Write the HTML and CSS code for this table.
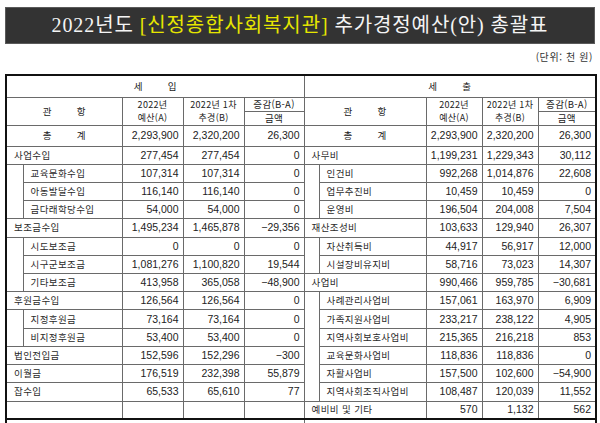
FILE: index.html
```html
<!DOCTYPE html>
<html lang="ko">
<head>
<meta charset="utf-8">
<title>2022년도 추가경정예산(안) 총괄표</title>
<link rel="stylesheet" href="styles.css">
</head>
<body>
<div class="page">
  <div class="title">2022년도 <span class="hl">[신정종합사회복지관]</span> 추가경정예산(안) 총괄표</div>
  <div class="unit">(단위: 천 원)</div>
  <table class="sheet">
    <colgroup>
      <col class="c-sub-l"><col class="c-lab-l"><col class="c-a-l"><col class="c-b-l"><col class="c-d-l">
      <col class="c-sub-r"><col class="c-lab-r"><col class="c-a-r"><col class="c-b-r"><col class="c-d-r">
    </colgroup>
    <tr class="r-sec">
      <td colspan="5" class="hd sp">세 입</td>
      <td colspan="5" class="hd sp">세 출</td>
    </tr>
    <tr class="r-h1">
      <td colspan="2" rowspan="2" class="hd sp">관 항</td>
      <td rowspan="2" class="hd two">2022년<br>예산(A)</td>
      <td rowspan="2" class="hd two">2022년 1차<br>추경(B)</td>
      <td class="hd">증감(B-A)</td>
      <td colspan="2" rowspan="2" class="hd sp">관 항</td>
      <td rowspan="2" class="hd two">2022년<br>예산(A)</td>
      <td rowspan="2" class="hd two">2022년 1차<br>추경(B)</td>
      <td class="hd">증감(B-A)</td>
    </tr>
    <tr class="r-h2">
      <td class="hd">금액</td>
      <td class="hd">금액</td>
    </tr>
    <tr class="r-tot">
      <td colspan="2" class="hd sp">총 계</td>
      <td class="n">2,293,900</td><td class="n">2,320,200</td><td class="n">26,300</td>
      <td colspan="2" class="hd sp">총 계</td>
      <td class="n">2,293,900</td><td class="n">2,320,200</td><td class="n">26,300</td>
    </tr>
    <tr class="r">
      <td colspan="2" class="lab top">사업수입</td>
      <td class="n">277,454</td><td class="n">277,454</td><td class="n">0</td>
      <td colspan="2" class="lab top">사무비</td>
      <td class="n">1,199,231</td><td class="n">1,229,343</td><td class="n">30,112</td>
    </tr>
    <tr class="r">
      <td rowspan="3" class="blank"></td>
      <td class="lab">교육문화수입</td>
      <td class="n">107,314</td><td class="n">107,314</td><td class="n">0</td>
      <td rowspan="3" class="blank"></td>
      <td class="lab">인건비</td>
      <td class="n">992,268</td><td class="n">1,014,876</td><td class="n">22,608</td>
    </tr>
    <tr class="r">
      <td class="lab">아동발달수입</td>
      <td class="n">116,140</td><td class="n">116,140</td><td class="n">0</td>
      <td class="lab">업무추진비</td>
      <td class="n">10,459</td><td class="n">10,459</td><td class="n">0</td>
    </tr>
    <tr class="r">
      <td class="lab">금다래학당수입</td>
      <td class="n">54,000</td><td class="n">54,000</td><td class="n">0</td>
      <td class="lab">운영비</td>
      <td class="n">196,504</td><td class="n">204,008</td><td class="n">7,504</td>
    </tr>
    <tr class="r">
      <td colspan="2" class="lab top">보조금수입</td>
      <td class="n">1,495,234</td><td class="n">1,465,878</td><td class="n">−29,356</td>
      <td colspan="2" class="lab top">재산조성비</td>
      <td class="n">103,633</td><td class="n">129,940</td><td class="n">26,307</td>
    </tr>
    <tr class="r">
      <td rowspan="3" class="blank"></td>
      <td class="lab">시도보조금</td>
      <td class="n">0</td><td class="n">0</td><td class="n">0</td>
      <td rowspan="2" class="blank"></td>
      <td class="lab">자산취득비</td>
      <td class="n">44,917</td><td class="n">56,917</td><td class="n">12,000</td>
    </tr>
    <tr class="r">
      <td class="lab">시구군보조금</td>
      <td class="n">1,081,276</td><td class="n">1,100,820</td><td class="n">19,544</td>
      <td class="lab">시설장비유지비</td>
      <td class="n">58,716</td><td class="n">73,023</td><td class="n">14,307</td>
    </tr>
    <tr class="r">
      <td class="lab">기타보조금</td>
      <td class="n">413,958</td><td class="n">365,058</td><td class="n">−48,900</td>
      <td colspan="2" class="lab top">사업비</td>
      <td class="n">990,466</td><td class="n">959,785</td><td class="n">−30,681</td>
    </tr>
    <tr class="r">
      <td colspan="2" class="lab top">후원금수입</td>
      <td class="n">126,564</td><td class="n">126,564</td><td class="n">0</td>
      <td rowspan="6" class="blank"></td>
      <td class="lab">사례관리사업비</td>
      <td class="n">157,061</td><td class="n">163,970</td><td class="n">6,909</td>
    </tr>
    <tr class="r">
      <td rowspan="2" class="blank"></td>
      <td class="lab">지정후원금</td>
      <td class="n">73,164</td><td class="n">73,164</td><td class="n">0</td>
      <td class="lab">가족지원사업비</td>
      <td class="n">233,217</td><td class="n">238,122</td><td class="n">4,905</td>
    </tr>
    <tr class="r">
      <td class="lab">비지정후원금</td>
      <td class="n">53,400</td><td class="n">53,400</td><td class="n">0</td>
      <td class="lab">지역사회보호사업비</td>
      <td class="n">215,365</td><td class="n">216,218</td><td class="n">853</td>
    </tr>
    <tr class="r">
      <td colspan="2" class="lab top">법인전입금</td>
      <td class="n">152,596</td><td class="n">152,296</td><td class="n">−300</td>
      <td class="lab">교육문화사업비</td>
      <td class="n">118,836</td><td class="n">118,836</td><td class="n">0</td>
    </tr>
    <tr class="r">
      <td colspan="2" class="lab top">이월금</td>
      <td class="n">176,519</td><td class="n">232,398</td><td class="n">55,879</td>
      <td class="lab">자활사업비</td>
      <td class="n">157,500</td><td class="n">102,600</td><td class="n">−54,900</td>
    </tr>
    <tr class="r">
      <td colspan="2" class="lab top">잡수입</td>
      <td class="n">65,533</td><td class="n">65,610</td><td class="n">77</td>
      <td class="lab">지역사회조직사업비</td>
      <td class="n">108,487</td><td class="n">120,039</td><td class="n">11,552</td>
    </tr>
    <tr class="r">
      <td colspan="2" class="lab top"></td>
      <td class="n"></td><td class="n"></td><td class="n"></td>
      <td colspan="2" class="lab top">예비비 및 기타</td>
      <td class="n">570</td><td class="n">1,132</td><td class="n">562</td>
    </tr>
    <tr class="r r-end">
      <td colspan="5" class="lab top"></td>
      <td colspan="5" class="lab top"></td>
    </tr>
  </table>
</div>
</body>
</html>
```

FILE: styles.css
```css
* {
  box-sizing: border-box;
}

html, body {
  margin: 0;
  padding: 0;
  background: #ffffff;
  overflow: hidden;
}

body {
  font-family: "Noto Sans CJK KR", "Noto Sans", sans-serif;
  color: #222222;
}

.page {
  padding: 7px 5px 0 5px;
  width: 600px;
}

.title {
  height: 37px;
  background: #333333;
  border: 1px solid #5a5a5a;
  color: #f4f4f4;
  font-family: "Liberation Serif", "Noto Sans CJK KR", serif;
  font-size: 20px;
  line-height: 34px;
  letter-spacing: 0.9px;
  text-align: center;
  white-space: nowrap;
}

.hl {
  color: #e6e600;
}

.unit {
  height: 30px;
  padding-right: 2px;
  font-size: 10px;
  line-height: 26px;
  color: #333333;
  text-align: right;
  letter-spacing: 0.6px;
}

.sheet {
  width: 590px;
  table-layout: fixed;
  border-collapse: collapse;
  border: 2px solid #111111;
}

.c-sub-l { width: 17px; }
.c-lab-l { width: 99px; }
.c-a-l { width: 61px; }
.c-b-l { width: 61px; }
.c-d-l { width: 60px; }
.c-sub-r { width: 15px; }
.c-lab-r { width: 107px; }
.c-a-r { width: 56px; }
.c-b-r { width: 56px; }
.c-d-r { width: 58px; }

.sheet td {
  border: 1px solid #6a6a6a;
  padding: 0;
  font-size: 9.5px;
  line-height: 11px;
  white-space: nowrap;
  overflow: hidden;
  vertical-align: middle;
}

.r-sec td { height: 22px; }
.r-h1 td { height: 14px; }
.r-h2 td { height: 14px; }
.r-tot td { height: 21px; }
.r td { height: 18.23px; }
.r-end td {
  border-top: 2px solid #111111;
  height: 18px;
}

.hd {
  text-align: center;
  letter-spacing: 0.3px;
}

.sp {
  word-spacing: 22px;
}

.r-h1 .hd, .r-h2 .hd {
  line-height: 12px;
}

.r-h1 .two {
  font-size: 9px;
  line-height: 13.2px;
}

.lab {
  padding-left: 7px !important;
  letter-spacing: 0.4px;
  color: #2a2a2a;
}

.n {
  text-align: right;
  padding-right: 4px !important;
  font-family: "Liberation Sans", "Noto Sans", sans-serif;
  font-size: 10.5px !important;
  color: #222222;
}
```
